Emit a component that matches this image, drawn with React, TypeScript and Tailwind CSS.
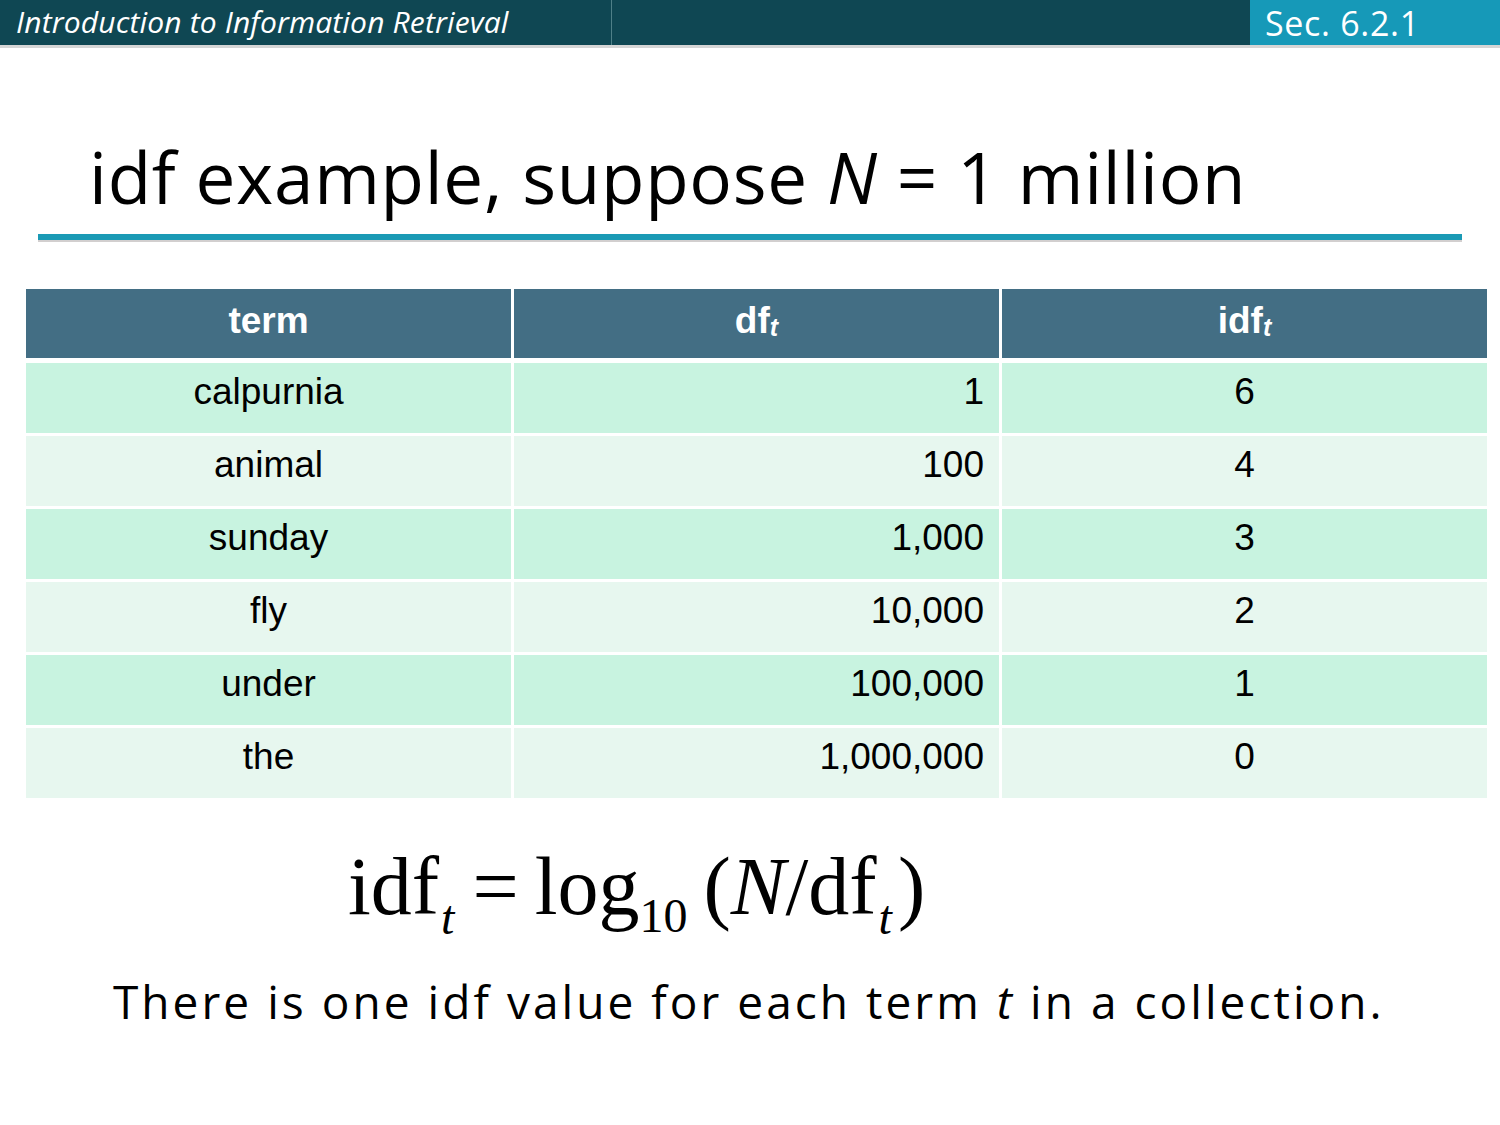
import React from "react";

interface Row {
  term: string;
  df: string;
  idf: string;
}

const rows: Row[] = [
  { term: "calpurnia", df: "1", idf: "6" },
  { term: "animal", df: "100", idf: "4" },
  { term: "sunday", df: "1,000", idf: "3" },
  { term: "fly", df: "10,000", idf: "2" },
  { term: "under", df: "100,000", idf: "1" },
  { term: "the", df: "1,000,000", idf: "0" },
];

const App = () => {
  return (
    <div className="w-[1500px] h-[1125px] bg-white overflow-hidden relative">
      {/* Top bar */}
      <div className="flex h-[45px] bg-[#0f4753]">
        <div className="w-[612px] border-r border-[#4f8088] flex items-center pl-[16px]">
          <span className="text-white italic text-[30px] leading-none font-['Open_Sans',sans-serif] tracking-[0.005em] pb-[2px]">
            Introduction to Information Retrieval
          </span>
        </div>
        <div className="flex-1" />
        <div className="w-[250px] bg-[#1699b8] flex items-center pl-[15px]">
          <span className="text-white text-[34px] leading-none font-['Open_Sans',sans-serif] tracking-[0.02em] pt-[1px]">
            Sec. 6.2.1
          </span>
        </div>
      </div>
      <div className="h-[3px] bg-[#d5d5d5]" />

      {/* Title */}
      <div className="pl-[89px] pt-[93px] h-[186px]">
        <h1 className="text-[71px] leading-none text-black font-['Open_Sans',sans-serif] tracking-[0.01em]">
          idf example, suppose <span className="italic">N</span> = 1 million
        </h1>
      </div>
      <div className="mx-[38px] h-[6px] bg-[#1a9ab5]" />
      <div className="mx-[38px] h-[2px] bg-[#d2cfcf]" />

      {/* Table */}
      <div className="mx-[26px] mt-[47px] w-[1461px] font-['Liberation_Sans',Arial,sans-serif] text-[37px]">
        <div className="grid grid-cols-3 gap-x-[3px] h-[69px] bg-white">
          <div className="bg-[#436e84] text-white font-bold flex items-center justify-center pb-[6px]">term</div>
          <div className="bg-[#436e84] text-white font-bold flex items-center justify-center pb-[6px]">
            <span>
              df<sub className="italic text-[25px] relative top-[3px]">t</sub>
            </span>
          </div>
          <div className="bg-[#436e84] text-white font-bold flex items-center justify-center pb-[6px]">
            <span>
              idf<sub className="italic text-[25px] relative top-[3px]">t</sub>
            </span>
          </div>
        </div>
        <div className="flex flex-col gap-y-[3px] mt-[5px]">
          {rows.map((r, i) => {
            const bg = i % 2 === 0 ? "bg-[#c8f3e0]" : "bg-[#e7f7ef]";
            return (
              <div key={r.term} className="grid grid-cols-3 gap-x-[3px] h-[70px] text-black">
                <div className={`${bg} flex items-center justify-center pb-[12px]`}>{r.term}</div>
                <div className={`${bg} flex items-center justify-end pr-[15px] pb-[12px]`}>{r.df}</div>
                <div className={`${bg} flex items-center justify-center pb-[12px]`}>{r.idf}</div>
              </div>
            );
          })}
        </div>
      </div>

      {/* Formula */}
      <div className="pl-[348px] mt-[48px] h-[104px] font-['Liberation_Serif','Times_New_Roman',serif] text-[82px] leading-none text-black whitespace-nowrap">
        <span>idf</span>
        <span className="italic text-[48px] relative top-[20px] ml-[2px]">t</span>
        <span className="ml-[18px]">=</span>
        <span className="ml-[16px]">log</span>
        <span className="text-[48px] relative top-[18px]">10</span>
        <span className="ml-[16px]">(</span>
        <span className="italic">N</span>
        <span>/df</span>
        <span className="italic text-[48px] relative top-[20px] ml-[2px]">t</span>
        <span className="ml-[6px]">)</span>
      </div>

      {/* Sentence */}
      <div className="pl-[113px] mt-[28px] font-['Open_Sans',sans-serif] text-[46px] leading-none text-black tracking-[0.066em] whitespace-nowrap">
        There is one idf value for each term <span className="italic">t</span> in a collection.
      </div>
    </div>
  );
};

export default App;
